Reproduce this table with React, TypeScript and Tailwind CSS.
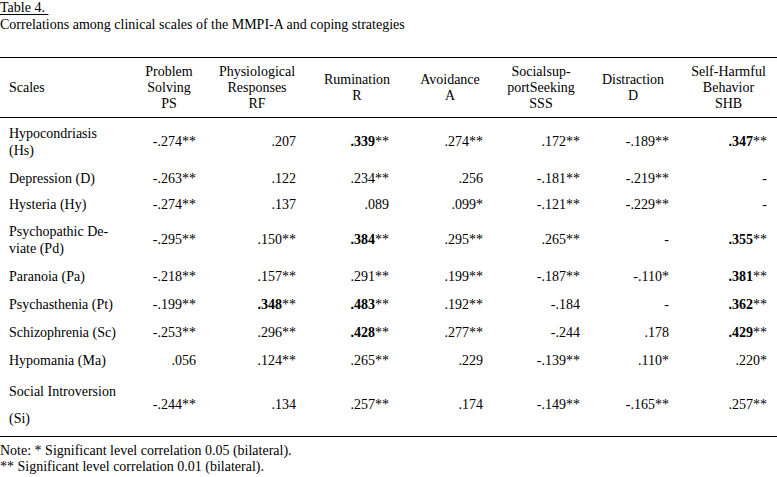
import React from "react";

type Cell = { v: string; b?: boolean };

const rows: { label: React.ReactNode; h: string; cells: Cell[] }[] = [
  {
    label: (
      <div className="leading-[17px]">
        Hypocondriasis
        <br />
        (Hs)
      </div>
    ),
    h: "h-[47px]",
    cells: [
      { v: "-.274**" },
      { v: ".207" },
      { v: ".339**", b: true },
      { v: ".274**" },
      { v: ".172**" },
      { v: "-.189**" },
      { v: ".347**", b: true },
    ],
  },
  {
    label: "Depression (D)",
    h: "h-[28px]",
    cells: [
      { v: "-.263**" },
      { v: ".122" },
      { v: ".234**" },
      { v: ".256" },
      { v: "-.181**" },
      { v: "-.219**" },
      { v: "-" },
    ],
  },
  {
    label: "Hysteria (Hy)",
    h: "h-[23px]",
    cells: [
      { v: "-.274**" },
      { v: ".137" },
      { v: ".089" },
      { v: ".099*" },
      { v: "-.121**" },
      { v: "-.229**" },
      { v: "-" },
    ],
  },
  {
    label: (
      <div className="leading-[17px]">
        Psychopathic De-
        <br />
        viate (Pd)
      </div>
    ),
    h: "h-[47px]",
    cells: [
      { v: "-.295**" },
      { v: ".150**" },
      { v: ".384**", b: true },
      { v: ".295**" },
      { v: ".265**" },
      { v: "-" },
      { v: ".355**", b: true },
    ],
  },
  {
    label: "Paranoia (Pa)",
    h: "h-[27px]",
    cells: [
      { v: "-.218**" },
      { v: ".157**" },
      { v: ".291**" },
      { v: ".199**" },
      { v: "-.187**" },
      { v: "-.110*" },
      { v: ".381**", b: true },
    ],
  },
  {
    label: "Psychasthenia (Pt)",
    h: "h-[29px]",
    cells: [
      { v: "-.199**" },
      { v: ".348**", b: true },
      { v: ".483**", b: true },
      { v: ".192**" },
      { v: "-.184" },
      { v: "-" },
      { v: ".362**", b: true },
    ],
  },
  {
    label: "Schizophrenia (Sc)",
    h: "h-[28px]",
    cells: [
      { v: "-.253**" },
      { v: ".296**" },
      { v: ".428**", b: true },
      { v: ".277**" },
      { v: "-.244" },
      { v: ".178" },
      { v: ".429**", b: true },
    ],
  },
  {
    label: "Hypomania (Ma)",
    h: "h-[27px]",
    cells: [
      { v: ".056" },
      { v: ".124**" },
      { v: ".265**" },
      { v: ".229" },
      { v: "-.139**" },
      { v: ".110*" },
      { v: ".220*" },
    ],
  },
  {
    label: (
      <div className="leading-[27px]">
        Social Introversion
        <br />
        (Si)
      </div>
    ),
    h: "h-[62px]",
    cells: [
      { v: "-.244**" },
      { v: ".134" },
      { v: ".257**" },
      { v: ".174" },
      { v: "-.149**" },
      { v: "-.165**" },
      { v: ".257**" },
    ],
  },
];

const padR = ["pr-[8px]", "pr-[14px]", "pr-[15px]", "pr-[13px]", "pr-[6px]", "pr-[11px]", "pr-[10px]"];

const gridCols = "grid grid-cols-[134px_70px_106px_94px_92px_90px_94px_97px]";

function Val({ c }: { c: Cell }) {
  if (c.b) {
    const num = c.v.replace(/\*+$/, "");
    const stars = c.v.slice(num.length);
    return (
      <span>
        <b className="font-bold">{num}</b>
        {stars}
      </span>
    );
  }
  return <span>{c.v}</span>;
}

const headers: string[][] = [
  ["Problem", "Solving", "PS"],
  ["Physiological", "Responses", "RF"],
  ["Rumination", "R"],
  ["Avoidance", "A"],
  ["Socialsup-", "portSeeking", "SSS"],
  ["Distraction", "D"],
  ["Self-Harmful", "Behavior", "SHB"],
];

export default function App() {
  return (
    <div className="w-[777px] h-[477px] bg-white text-black text-[14px] overflow-hidden font-['Liberation_Serif','Times_New_Roman',serif]">
      <div className="leading-[15px]">
        <span className="underline underline-offset-[2px]">Table 4.&nbsp;</span>
      </div>
      <div className="leading-[17px] mt-[1px]">
        Correlations among clinical scales of the MMPI-A and coping strategies
      </div>
      <div className="mt-[24px] border-t border-black">
        <div className={`${gridCols} h-[60px] items-center border-b border-black leading-[16px]`}>
          <div className="pl-[9px]">Scales</div>
          {headers.map((h, i) => (
            <div key={i} className="text-center">
              {h.map((l, j) => (
                <div key={j}>{l}</div>
              ))}
            </div>
          ))}
        </div>
        {rows.map((r, i) => (
          <div key={i} className={`${gridCols} ${r.h} items-center leading-[16px]`}>
            <div className="pl-[9px]">{r.label}</div>
            {r.cells.map((c, j) => (
              <div key={j} className={`text-right ${padR[j]}`}>
                <Val c={c} />
              </div>
            ))}
          </div>
        ))}
        <div className="border-t border-black pt-[6px] leading-[16px]">
          <div>Note: * Significant level correlation 0.05 (bilateral).</div>
          <div>** Significant level correlation 0.01 (bilateral).</div>
        </div>
      </div>
    </div>
  );
}
